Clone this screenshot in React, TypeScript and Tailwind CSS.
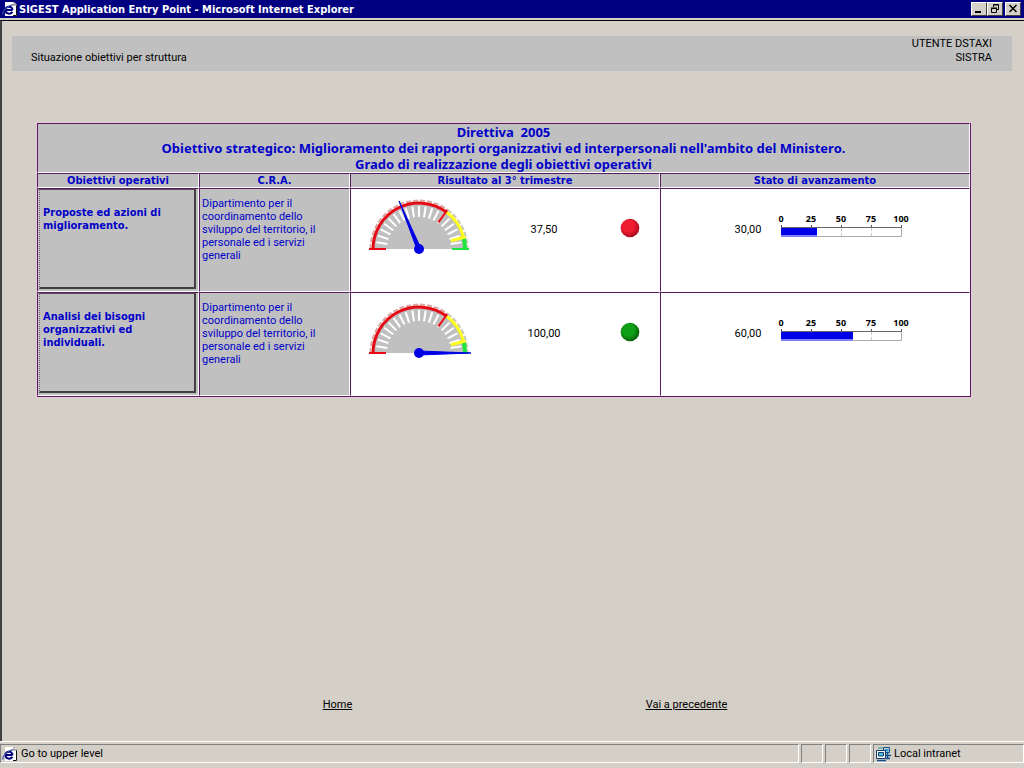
import React from 'react';

interface Objective {
  title: string;
  department: string;
  result: number;
  status: 'red' | 'green';
  progress: number;
}

const department =
  'Dipartimento per il coordinamento dello sviluppo del territorio, il personale ed i servizi generali';

const objectives: Objective[] = [
  { title: 'Proposte ed azioni di miglioramento.', department, result: 37.5, status: 'red', progress: 30 },
  { title: 'Analisi dei bisogni organizzativi ed individuali.', department, result: 100, status: 'green', progress: 60 },
];

const statusLabels: Record<Objective['status'], string> = {
  red: 'Obiettivo non raggiunto',
  green: 'Obiettivo raggiunto',
};

const boldFont = "font-['DejaVu_Sans_Condensed','DejaVu_Sans',sans-serif] font-bold";
const cell = 'border border-t-[#5a1a60] border-l-[#5a1a60] border-r-white border-b-white p-0';

function formatValue(value: number) {
  return value.toFixed(2).replace('.', ',');
}

// Point on the dial: 0 is the left end, 100 the right end.
function dialPoint(percent: number, radius: number) {
  const angle = Math.PI * (1 - percent / 100);
  return [52 + radius * Math.cos(angle), 52 - radius * Math.sin(angle)];
}

function dialArc(from: number, to: number, radius: number) {
  const [x1, y1] = dialPoint(from, radius);
  const [x2, y2] = dialPoint(to, radius);
  return `M${x1} ${y1}A${radius} ${radius} 0 0 1 ${x2} ${y2}`;
}

function dialLine(percent: number, inner: number, outer: number) {
  const [x1, y1] = dialPoint(percent, inner);
  const [x2, y2] = dialPoint(percent, outer);
  return `M${x1} ${y1}L${x2} ${y2}`;
}

function Gauge({ value }: { value: number }) {
  const ticks = Array.from({ length: 19 }, (_, i) => (i + 1) * 5);
  const [tipX, tipY] = dialPoint(value, 52);
  const [ax, ay] = dialPoint(value + 50, 2);
  const [bx, by] = dialPoint(value - 50, 2);
  return (
    <svg width="104" height="62" viewBox="0 0 104 62" role="img" aria-label={formatValue(value)}>
      <path d="M6 52A46 46 0 0 1 98 52Z" fill="#c0c0c0" />
      <path d={dialArc(0, 70, 48.5)} fill="none" stroke="#dcaaa6" strokeWidth="2" strokeDasharray="5 2" />
      <path d={dialArc(70, 100, 48.5)} fill="none" stroke="#c8c8b4" strokeWidth="2" strokeDasharray="5 2" />
      {ticks.map((t) => (
        <path key={t} d={dialLine(t, 32, 43)} stroke="#fff" strokeWidth="2" />
      ))}
      <path d={dialArc(0, 70, 46)} fill="none" stroke="#e60a14" strokeWidth="3" />
      <path d={dialArc(70, 92, 46)} fill="none" stroke="#ffff1e" strokeWidth="3" />
      <path d={dialArc(92, 100, 46)} fill="none" stroke="#1ee63c" strokeWidth="4" />
      <path d={dialLine(0, 33, 50)} stroke="#e60a14" strokeWidth="2" />
      <path d={dialLine(70, 33, 48)} stroke="#e60a14" strokeWidth="2" />
      <path d={dialLine(92, 33, 48)} stroke="#ffff1e" strokeWidth="3" />
      <path d={dialLine(100, 33, 50)} stroke="#1ee63c" strokeWidth="2" />
      <path d={`M${ax} ${ay}L${tipX} ${tipY}L${bx} ${by}Z`} fill="#0000e6" stroke="#0000e6" />
      <circle cx="52" cy="52" r="5" fill="#0000e6" />
    </svg>
  );
}

function Lamp({ status }: { status: Objective['status'] }) {
  const [light, dark] = status === 'red' ? ['#f01c30', '#a80c1c'] : ['#10a018', '#046008'];
  return (
    <svg width="20" height="20" viewBox="0 0 20 20" role="img" aria-label={statusLabels[status]}>
      <defs>
        <radialGradient id={`lamp-${status}`} cx="0.42" cy="0.4" r="0.6">
          <stop offset="0.5" stopColor={light} />
          <stop offset="1" stopColor={dark} />
        </radialGradient>
      </defs>
      <circle cx="10" cy="10" r="9.3" fill={`url(#lamp-${status})`} />
    </svg>
  );
}

function ProgressScale({ value }: { value: number }) {
  return (
    <svg width="140" height="32" viewBox="0 0 140 32" role="img" aria-label={`${value}%`}>
      {[0, 25, 50, 75, 100].map((mark) => (
        <g key={mark}>
          <text
            x={10 + mark * 1.2}
            y="9"
            textAnchor="middle"
            className="fill-black font-['Open_Sans',sans-serif] text-[9px] font-bold"
          >
            {mark}
          </text>
          <path d={`M${10.5 + mark * 1.2} 12v3`} stroke="#555" />
          <path d={`M${10.5 + mark * 1.2} 15v9`} stroke="#ccc" strokeDasharray="3 2" />
        </g>
      ))}
      <path d="M10 23.5h120.500v-9" fill="none" stroke="#aaa" />
      <path d="M10 14.5h121" stroke="#666" />
      <rect x="10" y="15" width={value * 1.2} height="7" fill="#0000e6" />
      <rect x="10" y="22" width={value * 1.2} height="2" fill="#8080f0" />
    </svg>
  );
}

function PageIcon() {
  return (
    <svg width="16" height="16" viewBox="0 0 16 16" aria-hidden="true">
      <path d="M3 1h9l3 3v11H3z" fill="#fff" />
      <path d="M14.500 4v10.500H11" fill="none" stroke="#111" />
      <path d="M12 1v3h3" fill="none" stroke="#777" />
      <path d="M10.500 9H3.500C3.500 5 10.500 4.500 10.500 9M3.500 9c0 4.500 5 4.500 7 1.800" fill="none" stroke="#00007f" strokeWidth="2" />
      <path d="M1 13.500C-.5 11 7 3.500 11.500 4" fill="none" stroke="#3c50a0" strokeWidth="1.200" />
    </svg>
  );
}

function IntranetIcon() {
  return (
    <svg width="16" height="16" viewBox="0 0 16 16" aria-hidden="true">
      <path d="M8.500 1.500h6v5h-6z" fill="#d4d0c8" stroke="#14508c" />
      <path d="M10 3h3.500v2.500H10z" fill="#28a0dc" />
      <path d="M3 2h5" stroke="#28a08c" />
      <path d="M1.500 4.500h9v8h-9z" fill="#fff" stroke="#123c6e" />
      <path d="M3.500 6.500h5v3.500h-5z" fill="#50c8e6" stroke="#123c6e" />
      <path d="M2 14.500h9M11 9.500h5M12.500 7v6M11 12.500h4" stroke="#14508c" strokeWidth="1.500" />
    </svg>
  );
}

function WindowButton({ label, children }: { label: string; children: React.ReactNode }) {
  return (
    <button
      type="button"
      aria-label={label}
      className="flex h-[14px] w-4 items-center justify-center border border-t-white border-r-[#404040] border-b-[#404040] border-l-white bg-[#d4d0c8]"
    >
      <svg width="12" height="12" viewBox="0 0 12 12" fill="none" stroke="#000">
        {children}
      </svg>
    </button>
  );
}

function TitleBar() {
  return (
    <header className="flex h-[18px] items-center bg-[#000080] pr-[3px] pl-[2px]">
      <PageIcon />
      <h1 className={`ml-px grow pt-px text-[11px] leading-4 text-white ${boldFont}`}>
        SIGEST Application Entry Point - Microsoft Internet Explorer
      </h1>
      <WindowButton label="Riduci a icona">
        <path d="M2 9h6" strokeWidth="2" />
      </WindowButton>
      <WindowButton label="Ripristina">
        <path d="M4.500 4V1.500h5v5H8M4 2h6M2.500 5.500h5v4h-5zM2 5h6" />
      </WindowButton>
      <span className="w-[2px]" />
      <WindowButton label="Chiudi">
        <path d="M2.500 2l7 7M9.500 2l-7 7" strokeWidth="1.500" />
      </WindowButton>
    </header>
  );
}

function StatusPanel({ className, children }: { className: string; children?: React.ReactNode }) {
  return (
    <div
      className={`flex h-[19px] items-center border border-t-[#808080] border-r-white border-b-white border-l-[#808080] ${className}`}
    >
      {children}
    </div>
  );
}

function StatusBar() {
  return (
    <footer className="flex h-[27px] gap-[2px] border-t border-white pt-[2px]">
      <StatusPanel className="grow gap-[3px] pl-px">
        <PageIcon />
        Go to upper level
      </StatusPanel>
      <StatusPanel className="w-[22px]" />
      <StatusPanel className="w-[22px]" />
      <StatusPanel className="w-[22px]" />
      <StatusPanel className="w-[151px] gap-[3px] pl-px">
        <IntranetIcon />
        Local intranet
      </StatusPanel>
    </footer>
  );
}

function ObjectiveRow({ objective }: { objective: Objective }) {
  return (
    <tr className="h-[104px] align-top">
      <td className={`${cell} bg-[#c0c0c0]`}>
        <button
          type="button"
          className={`ml-px block h-[100px] w-[157px] border-t border-r-2 border-b-2 border-l border-t-[#5a505a] border-r-[#404040] border-b-[#404040] border-l-[#806080] [border-left-style:dotted] pl-[3px] text-left text-[11px] leading-[13px] text-[#0000c8] ${boldFont}`}
        >
          <span className="block h-full w-[130px] pt-4">{objective.title}</span>
        </button>
      </td>
      <td className={`${cell} bg-[#c0c0c0]`}>
        <p className="max-w-[124px] pt-2 pl-[2px] leading-[13px] text-[#0000c8]">{objective.department}</p>
      </td>
      <td className={`${cell} bg-white`}>
        <div className="grid grid-cols-[136fr_114fr_58fr] place-items-center pt-2">
          <Gauge value={objective.result} />
          <span className="pt-[3px]">{formatValue(objective.result)}</span>
          <Lamp status={objective.status} />
        </div>
      </td>
      <td className={`${cell} bg-white`}>
        <div className="flex h-[70px] items-center justify-center gap-[10px] pt-[10px] pl-4">
          <span className="pt-[2px]">{formatValue(objective.progress)}</span>
          <ProgressScale value={objective.progress} />
        </div>
      </td>
    </tr>
  );
}

export default function App() {
  return (
    <div className="flex min-h-screen flex-col bg-[#d4d0c8] font-['Roboto',sans-serif] text-[11px] leading-[14px] text-black">
      <TitleBar />
      <main className="mt-[2px] flex grow flex-col border-t border-l-2 border-t-black border-l-[#404040]">
        <div className="mr-3 ml-[10px] mt-[15px] flex h-[35px] justify-between bg-[#c0c0c0] pt-px pr-5 pl-[19px]">
          <h2 className="pt-[14px]">Situazione obiettivi per struttura</h2>
          <p className="text-right">
            UTENTE DSTAXI
            <br />
            SISTRA
          </p>
        </div>
        <div className="mt-[52px] mr-[53px] ml-[35px]">
          <table className="w-full table-fixed border-separate border-spacing-0 border-r border-b border-[#5a1a60] outline outline-[#e4c8dc]">
            <colgroup>
              <col className="w-[162px]" />
              <col className="w-[151px]" />
              <col />
              <col />
            </colgroup>
            <thead className="bg-[#c0c0c0] text-[#0000c8]">
              <tr>
                <th
                  colSpan={4}
                  className={`${cell} h-[50px] font-['Noto_Sans',sans-serif] text-[13px] leading-4 font-bold`}
                >
                  Direttiva&nbsp; 2005
                  <br />
                  Obiettivo strategico: Miglioramento dei rapporti organizzativi ed interpersonali nell'ambito del
                  Ministero.
                  <br />
                  Grado di realizzazione degli obiettivi operativi
                </th>
              </tr>
              <tr className={`leading-[13px] ${boldFont}`}>
                <th className={cell}>Obiettivi operativi</th>
                <th className={cell}>C.R.A.</th>
                <th className={cell}>Risultato al 3° trimestre</th>
                <th className={cell}>Stato di avanzamento</th>
              </tr>
            </thead>
            <tbody>
              {objectives.map((objective) => (
                <ObjectiveRow key={objective.title} objective={objective} />
              ))}
            </tbody>
          </table>
        </div>
        <nav className="mx-auto mt-auto mb-[29px] grid w-[700px] max-w-full grid-cols-2 pr-[2px] text-center">
          <div>
            <a href="#home" className="underline">
              Home
            </a>
          </div>
          <div>
            <a href="#precedente" className="underline">
              Vai a precedente
            </a>
          </div>
        </nav>
      </main>
      <StatusBar />
    </div>
  );
}
